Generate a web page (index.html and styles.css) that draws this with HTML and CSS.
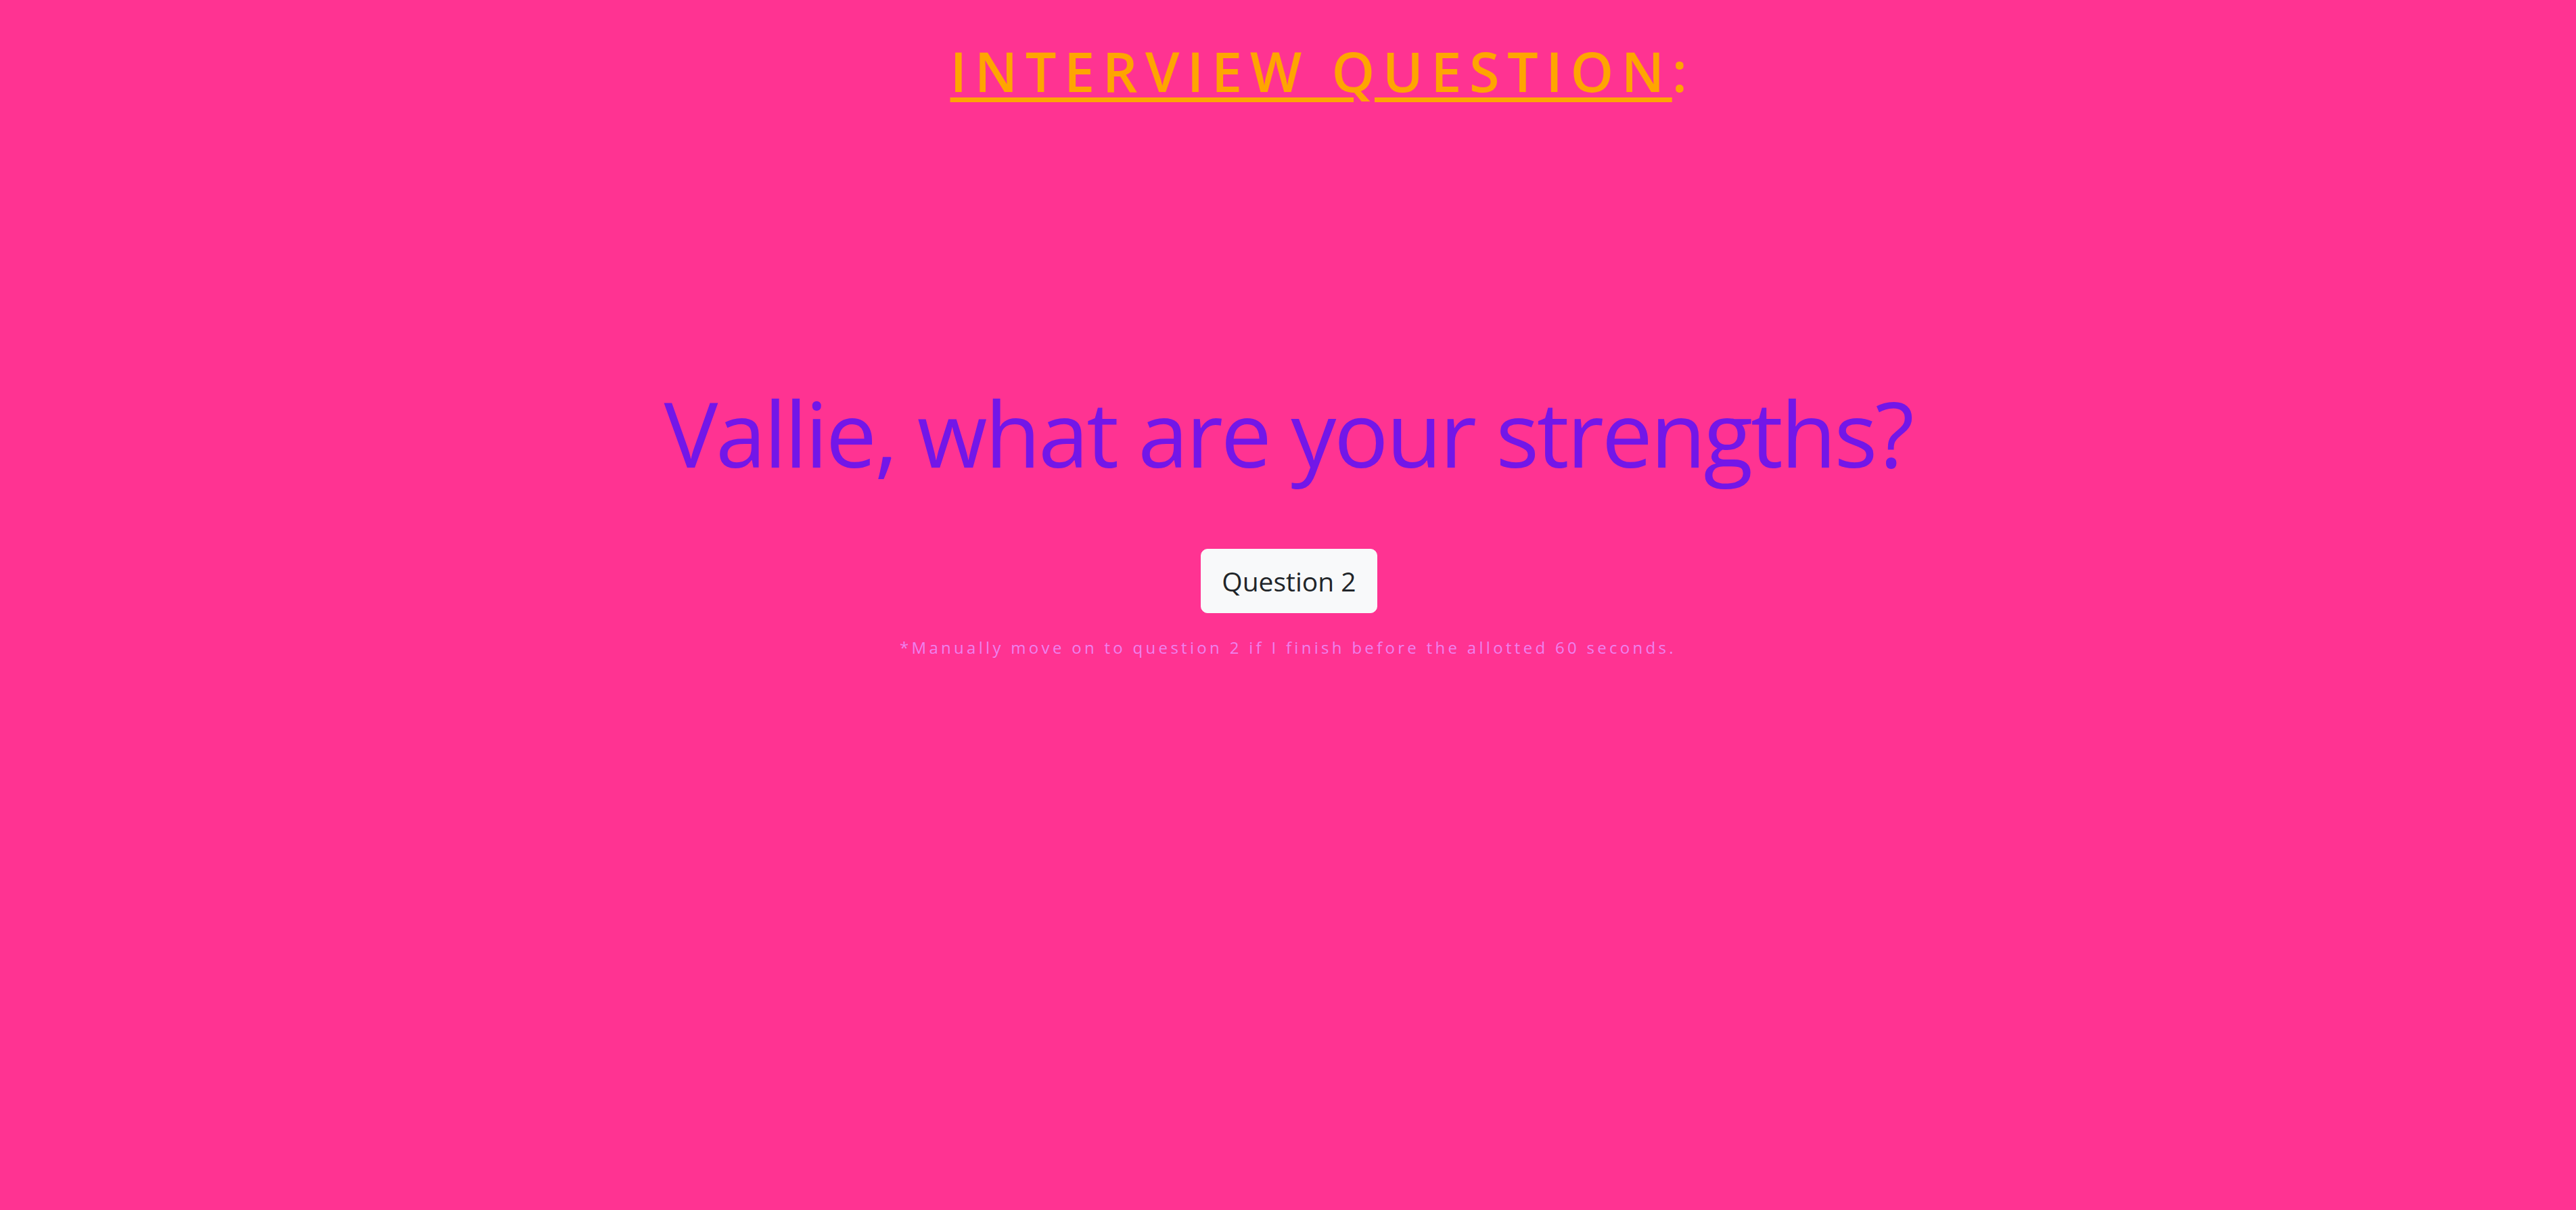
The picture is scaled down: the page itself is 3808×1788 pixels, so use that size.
FILE: index.html
```html
<!DOCTYPE html>
<html lang="en">
<head>
<meta charset="utf-8">
<title>Interview Question</title>
<link rel="stylesheet" href="styles.css">
</head>
<body>
<main class="page">
  <h1 class="title"><span class="title-u">INTERVIEW QUESTION</span>:</h1>
  <h2 class="question">Vallie, what are your strengths?</h2>
  <button class="btn-next" type="button">Question 2</button>
  <p class="note">*Manually move on to question 2 if I finish before the allotted 60 seconds.</p>
</main>
</body>
</html>
```
FILE: styles.css
```css
html, body {
  margin: 0;
  padding: 0;
}
body {
  background: #ff3392;
  font-family: "Open Sans", "Noto Sans", sans-serif;
  min-height: 1788px;
}
.page {
  display: flex;
  flex-direction: column;
  align-items: center;
}
.title {
  margin: 0;
  padding: 56px 0 0 102px;
  font-size: 81px;
  line-height: 97px;
  font-weight: 600;
  color: #ffa500;
  letter-spacing: 11.5px;
}
.title-u {
  text-decoration: underline;
  text-decoration-thickness: 7px;
  text-underline-offset: 8px;
}
.question {
  margin: 406px 0 0;
  font-size: 134px;
  line-height: 160px;
  font-weight: 400;
  color: #7316e8;
  letter-spacing: -3.3px;
}
.btn-next {
  margin-top: 92px;
  margin-left: 3px;
  font-family: inherit;
  font-size: 39px;
  line-height: 56px;
  padding: 19px 30px 18px;
  border: 1px solid #f8f9fa;
  border-radius: 10px;
  background: #f8f9fa;
  color: #212529;
}
.note {
  margin: 33px 0 0;
  font-size: 24px;
  line-height: 36px;
  color: #ee82ee;
  letter-spacing: 4.3px;
}
```
